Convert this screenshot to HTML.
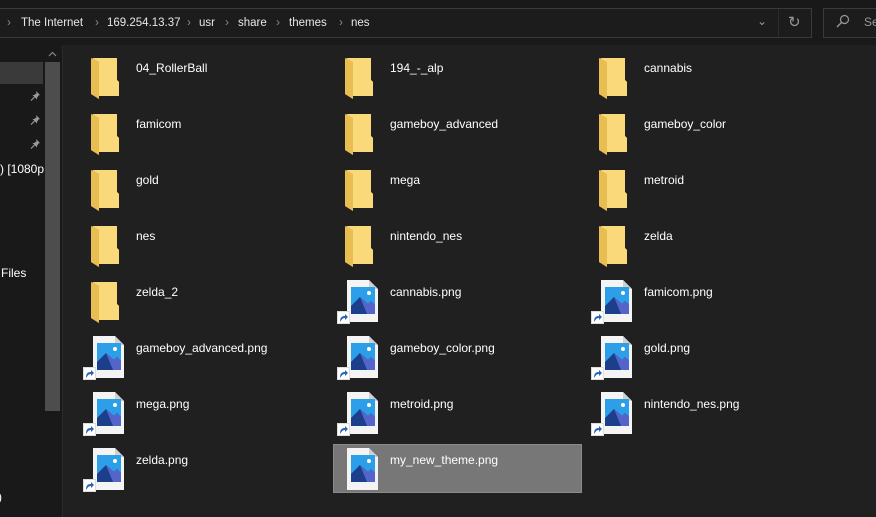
<!DOCTYPE html>
<html><head><style>
body{margin:0;width:876px;height:517px;background:#202020;overflow:hidden;font-family:"Liberation Sans",sans-serif;font-size:12px;color:#fff;position:relative}
.a{position:absolute}
.bc{position:absolute;top:16px;color:#e8e8e8;font-size:11.5px;line-height:14px;white-space:nowrap}
.ch{position:absolute;top:15px;color:#888;font-size:12px;line-height:14px}
</style></head><body>
<div class="a" style="left:0;top:0;width:876px;height:45px;background:#191919"></div>
<div class="a" style="left:-2px;top:8px;width:812px;height:28px;border:1px solid #3a3a3a;background:#1c1c1c"></div>
<div class="a" style="left:778px;top:9px;width:32px;height:28px;border-left:1px solid #2c2c2c"></div>
<div class="a" style="left:823px;top:8px;width:60px;height:28px;border:1px solid #3a3a3a;background:#1c1c1c"></div>
<span class="ch" style="left:7px">›</span><span class="bc" style="left:21px">The Internet</span>
<span class="ch" style="left:95px">›</span><span class="bc" style="left:107px">169.254.13.37</span>
<span class="ch" style="left:187px">›</span><span class="bc" style="left:199px">usr</span>
<span class="ch" style="left:225px">›</span><span class="bc" style="left:238px">share</span>
<span class="ch" style="left:276px">›</span><span class="bc" style="left:289px">themes</span>
<span class="ch" style="left:339px">›</span><span class="bc" style="left:351px">nes</span>
<div class="a" style="left:757px;top:14px;color:#999;font-size:12px">⌄</div>
<div class="a" style="left:788px;top:13px;color:#999;font-size:15px">↻</div>
<svg class="a" style="left:836px;top:14px" width="14" height="14"><circle cx="8.5" cy="5.5" r="4" fill="none" stroke="#999" stroke-width="1.2"/><line x1="5.5" y1="8.5" x2="1" y2="13" stroke="#999" stroke-width="1.3"/></svg>
<div class="a" style="left:864px;top:15px;color:#999">Se</div>
<div class="a" style="left:0;top:45px;width:62px;height:472px;background:#191919"></div>
<div class="a" style="left:62px;top:45px;width:1px;height:472px;background:#2a2a2a"></div>
<div class="a" style="left:0;top:62px;width:43px;height:22px;background:#3a3a3a"></div>
<div class="a" style="left:45px;top:62px;width:15px;height:349px;background:#4d4d4d"></div>
<svg class="a" style="left:48px;top:51px" width="9" height="6"><path d="M1 5L4.5 1.5L8 5" fill="none" stroke="#888" stroke-width="1.2"/></svg>
<svg width="0" height="0" style="position:absolute"><defs>
<g id="pin"><path d="M6 1L10 5L8.5 5.5L7 8L7 9.5L2.5 5L4 5L6.5 3.5Z" fill="#999"/><path d="M4.5 7L1 10.5" stroke="#999" stroke-width="1.2"/></g>
<g id="fd"><path d="M2 0H26V22L28 24V38H8V41L0 36V2Z" fill="#f0c860"/><path d="M2 0H26V22L28 24V38H8V4Z" fill="#fad97a"/><path d="M0 0L8 4V41L0 36Z" fill="#e8bd52"/></g>
<g id="pg"><path d="M1 0H23L32 9V42H1Z" fill="#f4f4f4"/><path d="M23 0V9H32" fill="#d0d0d0"/><rect x="5" y="7" width="24" height="27" fill="#2d9ee8"/><path d="M5 34V26L14 17L22 24L25 21L29 25V34Z" fill="#1b3f8a"/><path d="M14 17L22 24L25 21L29 25V34H21Z" fill="#5564c8"/><circle cx="23" cy="13" r="2" fill="#fff"/></g>
<g id="sc"><rect x="0" y="0" width="13" height="13" fill="#ddd"/><rect x="1" y="1" width="11" height="11" fill="#fff"/><path d="M3 11C3 6 5 5 8 5V3L11 6L8 9V7C6 7 5 8 3 11Z" fill="#2a63b8"/></g>
</defs></svg>
<svg class="a" style="left:30px;top:90px" width="12" height="12"><use href="#pin"/></svg>
<svg class="a" style="left:30px;top:114px" width="12" height="12"><use href="#pin"/></svg>
<svg class="a" style="left:30px;top:138px" width="12" height="12"><use href="#pin"/></svg>
<div class="a" style="left:0;top:162px;white-space:nowrap">) [1080p</div>
<div class="a" style="left:1px;top:266px">Files</div>
<div class="a" style="left:-2px;top:490px">)</div>
<div class="a" style="left:333px;top:444px;width:247px;height:47px;background:#777;border:1px solid #8a8a8a"></div>
<div id="grid"></div>
<script>
var items=[["04_RollerBall","f"],["194_-_alp","f"],["cannabis","f"],["famicom","f"],["gameboy_advanced","f"],["gameboy_color","f"],["gold","f"],["mega","f"],["metroid","f"],["nes","f"],["nintendo_nes","f"],["zelda","f"],["zelda_2","f"],["cannabis.png","p"],["famicom.png","p"],["gameboy_advanced.png","p"],["gameboy_color.png","p"],["gold.png","p"],["mega.png","p"],["metroid.png","p"],["nintendo_nes.png","p"],["zelda.png","p"],["my_new_theme.png","q"]];
var h="";items.forEach(function(it,i){var c=i%3,r=Math.floor(i/3);var x=91+c*254,y=58+r*56;
if(it[1]=="f")h+='<svg class="a" style="left:'+x+'px;top:'+y+'px" width="30" height="42"><use href="#fd"/></svg>';
else{h+='<svg class="a" style="left:'+(x+1)+'px;top:'+(y-2)+'px" width="33" height="43"><use href="#pg"/></svg>';
if(it[1]=="p")h+='<svg class="a" style="left:'+(x-8)+'px;top:'+(y+29)+'px" width="13" height="13"><use href="#sc"/></svg>';}
h+='<div class="a" style="left:'+(x+45)+'px;top:'+(y+3)+'px;white-space:nowrap">'+it[0]+'</div>';});
document.getElementById("grid").innerHTML=h;
</script>
</body></html>
